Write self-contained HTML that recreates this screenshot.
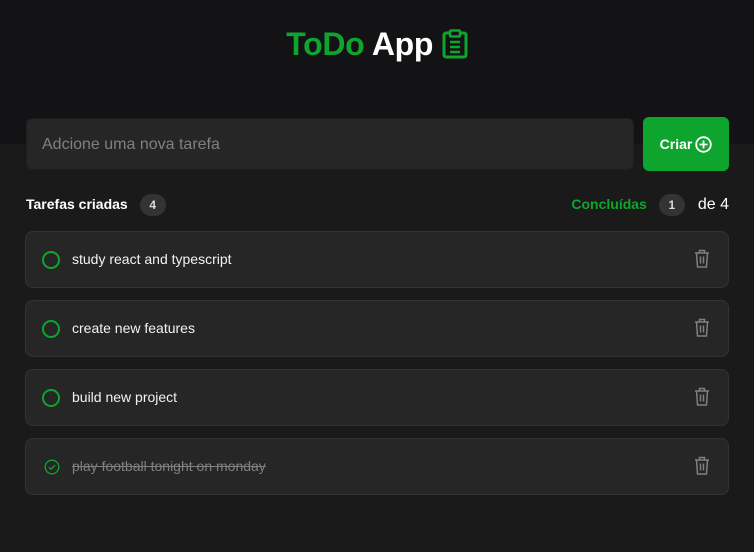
<!DOCTYPE html>
<html><head><style>
*{margin:0;padding:0;box-sizing:border-box}
body{width:754px;height:552px;background:#1a1a1a;font-family:"Liberation Sans",Arial,sans-serif;position:relative;overflow:hidden}
.hdr{position:absolute;left:0;top:0;width:754px;height:144px;background:#131315}
.title{position:absolute;top:26px;left:0;width:754px;text-align:center;font-size:32px;font-weight:bold;color:#fff;letter-spacing:-0.3px}
.title .g{color:#0ea52e}
.inp{position:absolute;left:26px;top:118px;width:608px;height:52px;background:#262626;border:1px solid #1e1e1e;border-radius:6px;color:#808080;font-size:16px;padding:17px 0 0 15px}
.btn{position:absolute;left:643px;top:117px;width:86px;height:54px;background:#0ea52e;border-radius:6px;color:#fff;font-weight:bold;font-size:14px;display:flex;align-items:center;justify-content:center;gap:3px}
.lbl{position:absolute;font-size:14px;font-weight:bold}
.badge{display:inline-block;background:#333;color:#d9d9d9;border-radius:12px;width:26px;height:22px;text-align:center;line-height:22px;font-size:12px;font-weight:bold;margin-left:12px}
.card{position:absolute;left:25px;width:704px;height:57px;background:#262626;border:1px solid #333;border-radius:8px}
.card .c{position:absolute;left:16px;top:19px;width:18px;height:18px;border:2px solid #0ea52e;border-radius:50%}
.card .t{position:absolute;left:46px;top:19px;font-size:14px;color:#f2f2f2}
.card svg.tr{position:absolute;left:668px;top:17px}
</style></head><body>
<div class="hdr"></div>
<div class="title"><span class="g">ToDo</span> App <svg width="26" height="30" viewBox="0 0 26 30" style="vertical-align:-4px"><rect x="2" y="4" width="22" height="24" rx="2" fill="none" stroke="#0ea52e" stroke-width="3"/><rect x="8" y="1.5" width="10" height="6" rx="1" fill="#131315" stroke="#0ea52e" stroke-width="2.5"/><path d="M8 13h10M8 18h10M8 23h10" stroke="#0ea52e" stroke-width="2.5"/></svg></div>
<div class="inp">Adcione uma nova tarefa</div>
<div class="btn">Criar <svg width="17" height="17" viewBox="0 0 17 17"><circle cx="8.5" cy="8.5" r="7.3" fill="none" stroke="#fff" stroke-width="1.8"/><path d="M8.5 4.5v8M4.5 8.5h8" stroke="#fff" stroke-width="1.8"/></svg></div>
<div class="lbl" style="left:26px;color:#fff;top:194px">Tarefas criadas<span class="badge">4</span></div>
<div class="lbl" style="right:25px;color:#0ea52e;top:194px">Concluídas<span class="badge">1</span><span style="color:#fff;font-weight:normal;font-size:16px;margin-left:13px">de 4</span></div>
<div class="card" style="top:231px"><div class="c"></div><div class="t">study react and typescript</div><svg class="tr" width="16" height="19" viewBox="0 0 16 19"><path d="M1 4h14M5.5 4V1.5h5V4M2.5 4l1 14h9l1-14M6.5 7.5v7M9.5 7.5v7" fill="none" stroke="#808080" stroke-width="1.5"/></svg></div>
<div class="card" style="top:300px"><div class="c"></div><div class="t">create new features</div><svg class="tr" width="16" height="19" viewBox="0 0 16 19"><path d="M1 4h14M5.5 4V1.5h5V4M2.5 4l1 14h9l1-14M6.5 7.5v7M9.5 7.5v7" fill="none" stroke="#808080" stroke-width="1.5"/></svg></div>
<div class="card" style="top:369px"><div class="c"></div><div class="t">build new project</div><svg class="tr" width="16" height="19" viewBox="0 0 16 19"><path d="M1 4h14M5.5 4V1.5h5V4M2.5 4l1 14h9l1-14M6.5 7.5v7M9.5 7.5v7" fill="none" stroke="#808080" stroke-width="1.5"/></svg></div>
<div class="card" style="top:438px"><svg style="position:absolute;left:18px;top:20px" width="16" height="16" viewBox="0 0 16 16"><circle cx="8" cy="8" r="6.8" fill="none" stroke="#0ea52e" stroke-width="1.3"/><path d="M5 8.2l2 2 4-4" fill="none" stroke="#0ea52e" stroke-width="1.3"/></svg><div class="t" style="color:#808080;text-decoration:line-through">play football tonight on monday</div><svg class="tr" width="16" height="19" viewBox="0 0 16 19"><path d="M1 4h14M5.5 4V1.5h5V4M2.5 4l1 14h9l1-14M6.5 7.5v7M9.5 7.5v7" fill="none" stroke="#808080" stroke-width="1.5"/></svg></div>
</body></html>
